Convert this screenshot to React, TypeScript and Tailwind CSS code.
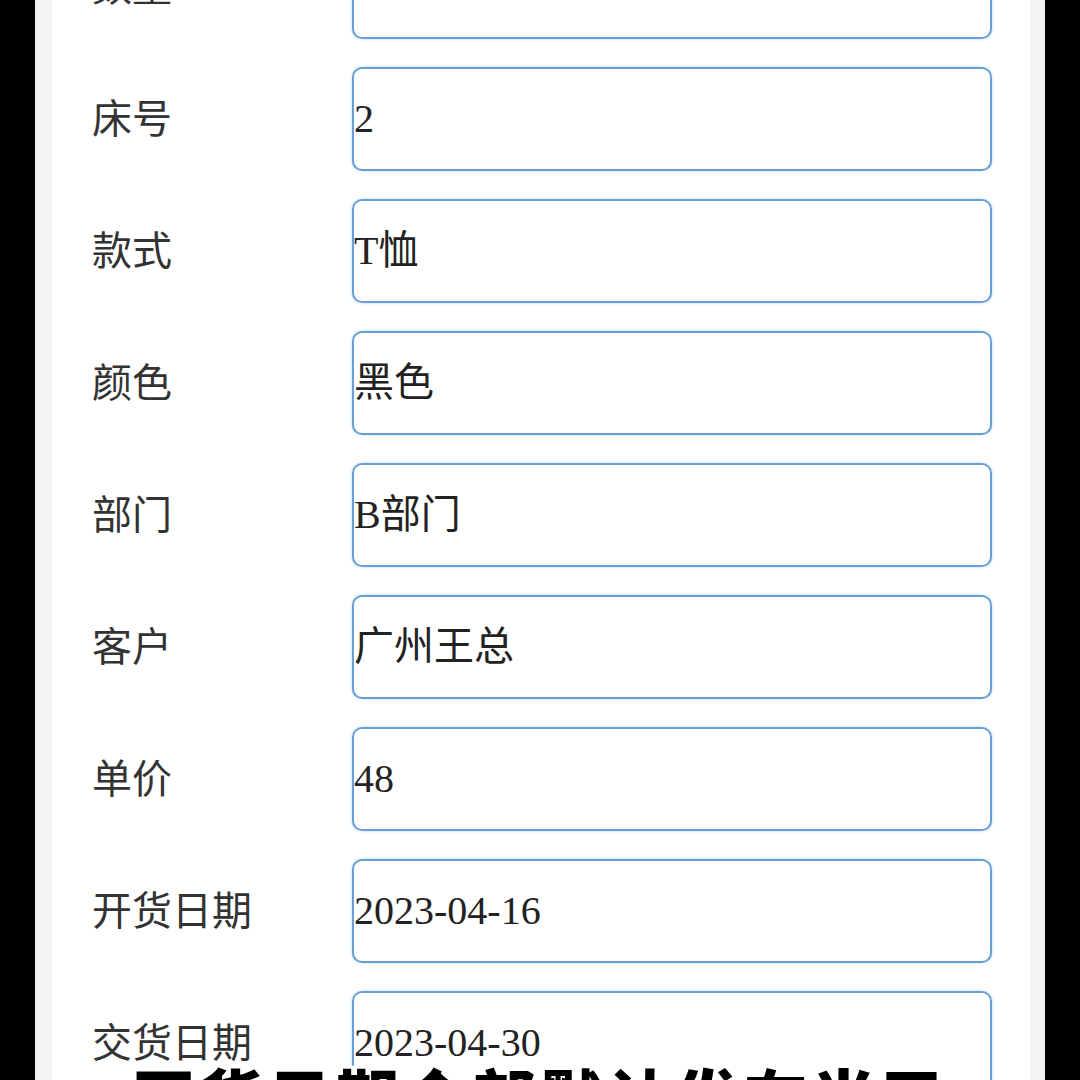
const rows = [
  { label: "数量", value: "100" },
  { label: "床号", value: "2" },
  { label: "款式", value: "T恤" },
  { label: "颜色", value: "黑色" },
  { label: "部门", value: "B部门" },
  { label: "客户", value: "广州王总" },
  { label: "单价", value: "48" },
  { label: "开货日期", value: "2023-04-16" },
  { label: "交货日期", value: "2023-04-30" },
];

export default function App() {
  return (
    <div className="relative h-[1080px] w-[1080px] overflow-hidden bg-black font-['Liberation_Serif','Noto_Sans_CJK_SC',serif]">
      <div className="mx-[35px] flex h-full flex-col bg-[#f3f3f3] pl-[17px] pr-[15px]">
        <div className="flex h-full flex-col overflow-hidden bg-white pl-[40px]">
          <div className="-mt-[65px] flex shrink-0 flex-col gap-[28px]">
            {rows.map((row) => (
              <div key={row.label} className="flex h-[104px] shrink-0 items-center">
                <div className="w-[260px] pb-[6px] font-['Noto_Sans_CJK_SC',sans-serif] text-[40px] leading-none text-[#333]">
                  {row.label}
                </div>
                <div className="flex h-full w-[640px] items-center rounded-[10px] border-2 border-[#6a9fd6] text-[40px] leading-none text-[#222] shadow-[0_0_3px_#a9d4f7]">
                  {row.value}
                </div>
              </div>
            ))}
          </div>
        </div>
      </div>

      {/* subtitle overlay */}
      <div className="absolute left-0 right-0 top-[1063px] text-center font-['Noto_Sans_CJK_SC',sans-serif] text-[63px] font-black leading-none tracking-[5px] text-black [-webkit-text-stroke:6px_white] [paint-order:stroke_fill]">
        开货日期全部默认发布当天
      </div>
    </div>
  );
}
